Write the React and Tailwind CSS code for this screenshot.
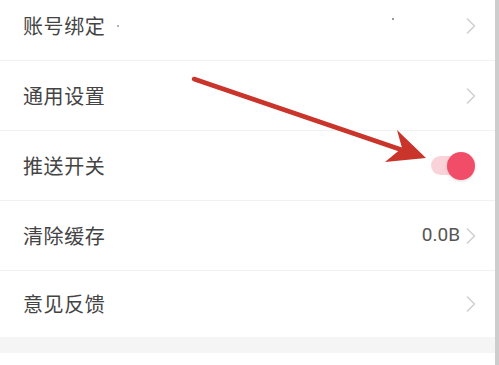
const rows = [
  { label: '账号绑定', kind: 'link', dots: true },
  { label: '通用设置', kind: 'link' },
  { label: '推送开关', kind: 'switch' },
  { label: '清除缓存', kind: 'link', value: '0.0B' },
  { label: '意见反馈', kind: 'link', last: true },
];

function Chevron() {
  return (
    <svg width="10" height="16" viewBox="0 0 10 16" className="shrink-0">
      <polyline points="1.5,1 8.5,8 1.5,15" fill="none" stroke="#d0d0d0" strokeWidth="1.6" strokeLinejoin="round" strokeLinecap="round" />
    </svg>
  );
}

function Switch() {
  return (
    <div className="relative w-[45px] h-[30px] flex items-center">
      <div className="absolute left-0 right-[6px] h-[19px] rounded-full bg-[#f9d3d9]" />
      <div className="absolute right-[1px] w-[28px] h-[28px] rounded-full bg-[#f24d68] shadow-[0_1px_3px_rgba(0,0,0,0.15)]" />
    </div>
  );
}

export default function App() {
  return (
    <div
      className="relative w-[499px] h-[365px] overflow-hidden bg-white"
      style={{ fontFamily: '"Noto Sans CJK SC", "Noto Sans", sans-serif' }}
    >
      <div className="flex items-start h-full">
        <div className="flex-1 -mt-[9px] border-b-[16px] border-[#f5f5f5] bg-white">
          {rows.map((r) => (
            <div
              key={r.label}
              className={`flex items-center pl-[23px] pr-[19px] ${r.last ? 'h-[66px]' : 'h-[70px] border-b border-[#f1f1f1]'}`}
            >
              <span className="text-[20px] text-[#444] tracking-[0.6px]">{r.label}</span>
              {r.dots && <span className="ml-[12px] w-[2px] h-[2px] rounded-full bg-[#999]" />}
              <div className="flex-1" />
              {r.dots && <span className="mr-[72px] w-[2px] h-[2px] rounded-full bg-[#777] -mt-[14px]" />}
              {r.value && (
                <span className="text-[19px] text-[#555] mr-[6px]" style={{ fontFamily: 'Roboto, "Noto Sans", sans-serif' }}>
                  {r.value}
                </span>
              )}
              {r.kind === 'link' && <Chevron />}
              {r.kind === 'switch' && <Switch />}
            </div>
          ))}
        </div>
        <div className="w-[4px] h-full shrink-0 bg-[#cdcdcd]" />
      </div>

      <svg className="absolute left-0 top-0 pointer-events-none" width="499" height="365" viewBox="0 0 499 365">
        <line x1="194" y1="79" x2="405" y2="151" stroke="#c9342b" strokeWidth="4.5" strokeLinecap="round" />
        <polygon points="426,158 397,130 402,148 385,162" fill="#c9342b" />
      </svg>
    </div>
  );
}
